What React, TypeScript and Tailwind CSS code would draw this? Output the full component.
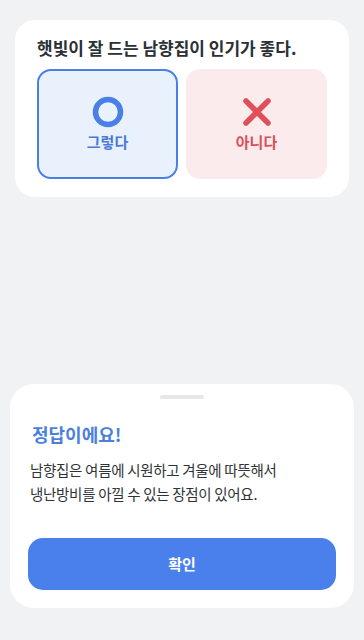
export default function App() {
  const font = { fontFamily: '"Noto Sans CJK KR", "Noto Sans", sans-serif' };
  return (
    <div style={font} className="w-[364px] h-[640px] bg-[#f1f2f4] flex flex-col overflow-hidden">
      <div className="mx-[15px] mt-[20px] bg-white rounded-[20px] px-[22px] pt-[16px] pb-[18px]">
        <div className="text-[17px] leading-[24px] font-bold text-[#2b2f36]">
          햇빛이 잘 드는 남향집이 인기가 좋다.
        </div>
        <div className="mt-[9px] grid grid-cols-2 gap-[8px]">
          <div className="h-[110px] rounded-[14px] border-[2.5px] border-[#4a80e6] bg-[#e9f1fd] flex flex-col items-center pt-[25px]">
            <svg width="32" height="32" viewBox="0 0 32 32">
              <circle cx="16" cy="16" r="12.5" fill="none" stroke="#4a80e6" strokeWidth="5.5" />
            </svg>
            <div className="mt-[4px] text-[15px] leading-[20px] font-bold text-[#4a7ad6]">그렇다</div>
          </div>
          <div className="h-[110px] rounded-[14px] bg-[#fcebed] flex flex-col items-center pt-[27px]">
            <svg width="32" height="32" viewBox="0 0 32 32">
              <path d="M5 5 L27 27 M27 5 L5 27" stroke="#e0505a" strokeWidth="5.5" strokeLinecap="round" />
            </svg>
            <div className="mt-[4px] text-[15px] leading-[20px] font-bold text-[#d9505a]">아니다</div>
          </div>
        </div>
      </div>

      <div className="mt-auto mb-[32px] mx-[10px] bg-white rounded-[24px] px-[18px] pt-[11px] pb-[18px] flex flex-col">
        <div className="self-center w-[44px] h-[4px] rounded-full bg-[#e5e7eb]" />
        <div className="mt-[22px] px-[4px] text-[18px] leading-[26px] font-bold text-[#4a7fe0]">정답이에요!</div>
        <div className="mt-[11px] px-[2px] text-[14.5px] leading-[24px] text-[#2f3338] tracking-[-0.3px]">
          남향집은 여름에 시원하고 겨울에 따뜻해서
          <br />
          냉난방비를 아낄 수 있는 장점이 있어요.
        </div>
        <div className="mt-[32px] h-[52px] rounded-[15px] bg-[#4a80ec] flex items-center justify-center text-white text-[15px] font-bold">
          확인
        </div>
      </div>
    </div>
  );
}
